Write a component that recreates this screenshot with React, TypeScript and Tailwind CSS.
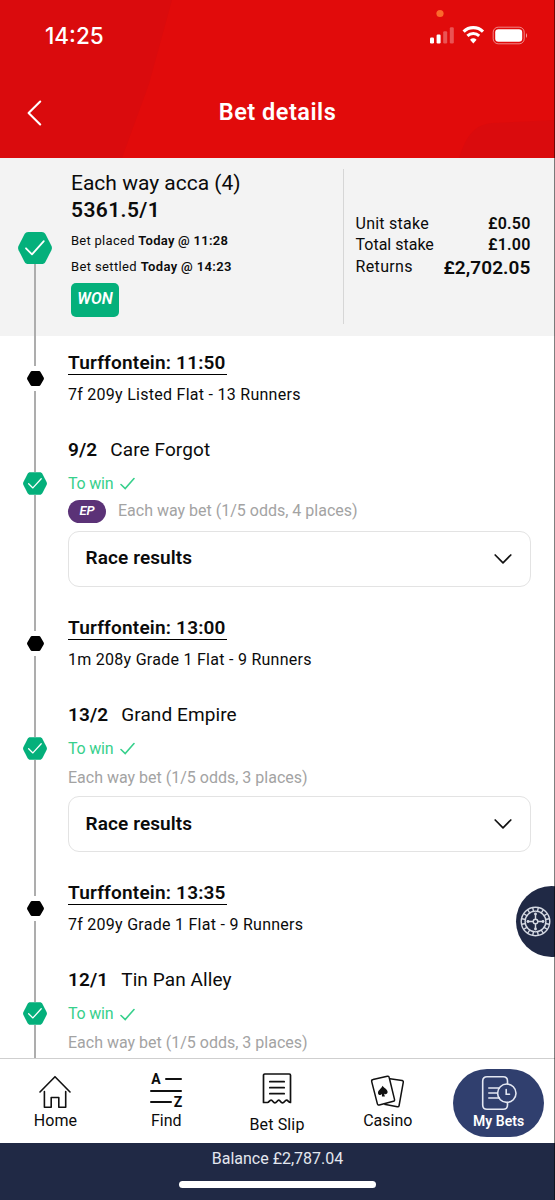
import clsx from 'clsx';

const legs = [
  {
    title: 'Turffontein: 11:50',
    race: '7f 209y Listed Flat - 13 Runners',
    odds: '9/2',
    horse: 'Care Forgot',
    terms: 'Each way bet (1/5 odds, 4 places)',
    earlyPrice: true,
    hasResults: true,
  },
  {
    title: 'Turffontein: 13:00',
    race: '1m 208y Grade 1 Flat - 9 Runners',
    odds: '13/2',
    horse: 'Grand Empire',
    terms: 'Each way bet (1/5 odds, 3 places)',
    earlyPrice: false,
    hasResults: true,
  },
  {
    title: 'Turffontein: 13:35',
    race: '7f 209y Grade 1 Flat - 9 Runners',
    odds: '12/1',
    horse: 'Tin Pan Alley',
    terms: 'Each way bet (1/5 odds, 3 places)',
    earlyPrice: false,
    hasResults: false,
  },
];

function WonHexagon({ className }: { className: string }) {
  return (
    <svg viewBox="0 0 34 32" className={clsx('block shrink-0', className)} fill="none">
      <path
        d="M10.2 0h13.6c1.6 0 2.8.8 3.6 2.1l6 11.7c.7 1.4.7 3 0 4.4l-6 11.7c-.8 1.3-2 2.1-3.6 2.1H10.2c-1.6 0-2.8-.8-3.6-2.1l-6-11.7c-.7-1.4-.7-3 0-4.4l6-11.7C7.4.8 8.6 0 10.2 0Z"
        fill="#04b07b"
      />
      <path d="M8 16.3l6 6L25.8 9.2" stroke="#fff" strokeWidth="1.8" strokeLinecap="round" strokeLinejoin="round" />
    </svg>
  );
}

function StatusBar() {
  return (
    <div className="flex h-[71px] items-center justify-between pl-[45px] pr-[27px]">
      <span className="font-['Inter'] text-[22.5px] font-medium text-white">14:25</span>
      <svg width="99" height="40" viewBox="0 0 99 40" fill="none" className="mb-[22px]">
        <circle cx="11" cy="8.5" r="3.6" fill="#fb6a2c" />
        <rect x="1" y="32.5" width="4" height="6" rx="1.2" fill="#fff" />
        <rect x="7.6" y="29.5" width="4" height="9" rx="1.2" fill="#fff" />
        <rect x="14.2" y="26.3" width="4" height="12.2" rx="1.2" fill="#fff" fillOpacity=".3" />
        <rect x="20.8" y="22.3" width="4" height="16.2" rx="1.2" fill="#fff" fillOpacity=".3" />
        <path d="M34.6 26.6a14 14 0 0 1 19.4 0" stroke="#fff" strokeWidth="3.2" />
        <path d="M38.4 30.8a8.6 8.6 0 0 1 11.8 0" stroke="#fff" strokeWidth="3" />
        <path d="M41 34.8a5 5 0 0 1 6.6 0l-3.3 3.7Z" fill="#fff" />
        <rect x="64.2" y="22.2" width="31" height="16.6" rx="5" stroke="#fff" strokeOpacity=".5" />
        <rect x="66.2" y="24.2" width="27" height="12.6" rx="3.2" fill="#fff" />
        <path d="M97 28.2c1.4.6 1.4 4 0 4.6Z" fill="#fff" fillOpacity=".6" />
      </svg>
    </div>
  );
}

function Header() {
  return (
    <header className="relative h-[158px] shrink-0 bg-[#e10b0b]">
      <svg viewBox="0 0 555 158" className="absolute inset-0 h-full w-full">
        <path d="M0 0h172L149 84 122 158H0Z" fill="#da0b0d" />
        <path d="M459 158c7-21 14-33 33-35l63-3v38Z" fill="#da0b0d" />
      </svg>
      <div className="relative">
        <StatusBar />
        <div className="grid h-[83px] grid-cols-[70px_1fr_70px] items-center">
          <svg width="16" height="26" viewBox="0 0 16 26" fill="none" className="ml-[26.5px]">
            <path d="M13.2 1.5L1.6 13l11.6 11.5" stroke="#fff" strokeWidth="2.1" strokeLinecap="round" strokeLinejoin="round" />
          </svg>
          <h1 className="text-center text-[23.5px] font-semibold tracking-[0.5px] text-white">Bet details</h1>
        </div>
      </div>
    </header>
  );
}

function Summary() {
  return (
    <section className="flex h-[178px] shrink-0 bg-[#f3f3f3]">
      <div className="ml-[18px] flex w-[34px] flex-col items-center pt-[74px]">
        <WonHexagon className="h-8 w-[34px]" />
        <div className="w-[1.5px] flex-1 bg-[#adadad]" />
      </div>
      <div className="ml-[19px] w-[271.5px] pt-3">
        <p className="text-[21px] leading-[27px]">Each way acca (4)</p>
        <p className="text-[21px] leading-[27px] font-semibold tracking-[0.4px]">5361.5/1</p>
        <p className="mt-1 text-[13px] leading-[26px] tracking-[0.27px]">
          Bet placed <b className="font-semibold">Today @ 11:28</b>
        </p>
        <p className="text-[13px] leading-[26px] tracking-[0.37px]">
          Bet settled <b className="font-semibold">Today @ 14:23</b>
        </p>
        <span className="mt-[3px] flex h-[34px] w-12 items-center justify-center rounded-[5px] bg-[#04b07b] pb-0.5 text-[16px] font-semibold text-white italic">
          WON
        </span>
      </div>
      <div className="mt-[11px] mb-3 w-[188px] border-l-[1.5px] border-[#d6d6d6] pt-11 pl-3 text-[16px] leading-[21.3px]">
        <div className="flex justify-between">
          <span className="tracking-[0.25px]">Unit stake</span>
          <b className="font-semibold tracking-[0.2px]">£0.50</b>
        </div>
        <div className="flex justify-between">
          <span>Total stake</span>
          <b className="font-semibold tracking-[0.2px]">£1.00</b>
        </div>
        <div className="flex justify-between">
          <span className="tracking-[0.35px]">Returns</span>
          <b className="pt-px text-[19px] font-semibold tracking-[0.1px]">£2,702.05</b>
        </div>
      </div>
    </section>
  );
}

function Leg({ leg }: { leg: (typeof legs)[number] }) {
  return (
    <article className="flex h-[265.3px] shrink-0">
      <div className="ml-[18px] flex w-[34px] shrink-0 flex-col items-center">
        <div className="h-[29.5px] w-[1.5px] bg-[#adadad]" />
        <svg viewBox="0 0 17 15" className="my-[5px] h-[15px] w-[17px]">
          <path d="M5 0h7c.7 0 1.2.3 1.5.9l3.2 5.7c.3.6.3 1.2 0 1.8l-3.2 5.7c-.3.6-.8.9-1.5.9H5c-.7 0-1.2-.3-1.5-.9L.3 8.4a1.9 1.9 0 0 1 0-1.8L3.5.9C3.8.3 4.3 0 5 0Z" />
        </svg>
        <div className="h-[81px] w-[1.5px] bg-[#adadad]" />
        <WonHexagon className="h-[23px] w-6" />
        <div className="w-[1.5px] flex-1 bg-[#adadad]" />
      </div>

      <div className="mr-6 ml-4 min-w-0 flex-1 pt-[14.5px]">
        <h2 className="w-fit border-b-[1.5px] border-black pr-px text-[19px] leading-[23px] font-semibold tracking-[0.2px]">
          {leg.title}
        </h2>
        <p className="mt-2 text-[16px] leading-6 tracking-[0.27px]">{leg.race}</p>
        <p className="mt-[29px] flex gap-[13px] text-[19px] leading-7 tracking-[0.1px]">
          <b className="font-semibold">{leg.odds}</b>
          <span>{leg.horse}</span>
        </p>
        <p className="mt-[9px] flex items-center gap-[7px] text-[16px] leading-[22px] tracking-[-0.2px] text-[#37d08c]">
          To win
          <svg width="15" height="13" viewBox="0 0 15 13" fill="none">
            <path d="M1 7.5l4.2 4L14 1.5" stroke="#37d08c" strokeWidth="1.6" strokeLinecap="round" />
          </svg>
        </p>
        <p
          className={clsx(
            'flex items-center text-[16px] leading-6 text-[#a3a3a3]',
            leg.earlyPrice ? 'mt-[4.5px]' : 'mt-[6px] -mb-[1.5px]'
          )}
        >
          {leg.earlyPrice && (
            <span className="mr-3 flex h-[23px] w-[38px] items-center justify-center rounded-full bg-[#5b3277] text-[13px] font-semibold text-white italic">
              EP
            </span>
          )}
          {leg.terms}
        </p>
        {leg.hasResults && (
          <button className="mt-[7.5px] flex h-14 w-full items-center justify-between rounded-[11px] border-[1.5px] border-[#e3e3e3] pr-[18px] pl-[16.5px] text-[19px] font-semibold tracking-[0.1px]">
            Race results
            <svg width="18" height="10" viewBox="0 0 18 10" fill="none">
              <path d="M1.2 1L9 8.8 16.8 1" stroke="#111" strokeWidth="1.7" strokeLinecap="round" strokeLinejoin="round" />
            </svg>
          </button>
        )}
      </div>
    </article>
  );
}

function RouletteButton() {
  const pockets = Array.from({ length: 16 }, (_, i) => i * 22.5 + 11.25);
  return (
    <button className="absolute top-[886px] left-[516px] flex h-[71px] w-[71px] items-center rounded-full bg-[#202945] pl-1">
      <svg width="31" height="31" viewBox="0 0 31 31" fill="none" stroke="#d5d9e3" strokeWidth="1.4">
        <circle cx="15.5" cy="15.5" r="14.3" />
        <circle cx="15.5" cy="15.5" r="10.4" />
        {pockets.map((angle) => (
          <path key={angle} d="M15.5 1.5v4" transform={`rotate(${angle} 15.5 15.5)`} />
        ))}
        <path d="M15.5 7v17M7 15.5h17" />
        <circle cx="15.5" cy="15.5" r="2.3" fill="#202945" />
        <g fill="#d5d9e3" stroke="none">
          <circle cx="15.5" cy="8" r="1.4" />
          <circle cx="15.5" cy="23" r="1.4" />
          <circle cx="8" cy="15.5" r="1.4" />
          <circle cx="23" cy="15.5" r="1.4" />
        </g>
      </svg>
    </button>
  );
}

function HomeIcon() {
  return (
    <svg width="32" height="34" viewBox="0 0 32 34" fill="none" stroke="#111" strokeWidth="1.6" strokeLinecap="round" strokeLinejoin="round">
      <path d="M1 17L16 1.7 31 17" />
      <path d="M5.4 16.5v15.7h6.8v-9.7h7.6v9.7h6.9V16.5" />
    </svg>
  );
}

function FindIcon() {
  return (
    <div className="flex h-[35px] w-8 flex-col justify-between text-[14px] leading-3 font-bold">
      <div className="flex items-center justify-between pl-px">
        <span>A</span>
        <span className="h-0.5 w-[17px] rounded-full bg-[#111]" />
      </div>
      <span className="h-0.5 w-full shrink-0 rounded-full bg-[#111]" />
      <div className="flex items-center justify-between">
        <span className="h-0.5 w-[21.5px] rounded-full bg-[#111]" />
        <span>Z</span>
      </div>
    </div>
  );
}

function BetSlipIcon() {
  return (
    <svg width="30" height="34" viewBox="0 0 30 34" fill="none" stroke="#111" strokeWidth="1.7" strokeLinecap="round" strokeLinejoin="round">
      <path d="M1.5 30.5V3.2c0-.8.5-1.2 1.2-1.2h24.6c.8 0 1.2.4 1.2 1.2v27.3c-2 0-2.2-2.3-4-2.3s-2 2.6-4 2.6-2-2.6-3.7-2.6-2 2.6-3.9 2.6-2-2.6-3.8-2.6-2 2.3-3.6 2.3Z" />
      <path d="M7.8 9.7h14.4M7.8 15.7h14.4M7.8 21.7h14.4" />
    </svg>
  );
}

function CasinoIcon() {
  return (
    <svg width="34" height="34" viewBox="0 0 34 34" fill="none" stroke="#111" strokeWidth="1.5" strokeLinejoin="round" className="-ml-px">
      <path d="M20 3.8l12 1.7c1 .2 1.5.8 1.3 1.7l-4.2 23.3c-.2 1-.8 1.5-1.8 1.3l-13-2.6" />
      <path d="M3 4.5L17.3 1.3c1-.2 1.7.2 1.9 1.2l5.3 21.9c.2 1-.1 1.7-1.100 1.900L9.300 30c-1 .3-1.700-.2-1.900-1.100L1.700 6.600C1.500 5.500 2 4.700 3 4.500Z" fill="#fff" />
      <path
        d="M12.500 10.800c1.400 2.300 4.800 3.200 5.100 5.900.2 2-1.900 3.200-3.500 2.100l.8 2.700h-3l.1-2.500c-1.400 1.600-3.900 1.100-4-1.100-.1-2.700 3.500-4.100 4.500-7.100Z"
        fill="#111"
        stroke="none"
      />
    </svg>
  );
}

function MyBetsIcon() {
  return (
    <svg width="36" height="36" viewBox="0 0 36 36" fill="none" stroke="#e3e7f2" strokeWidth="1.6" strokeLinecap="round">
      <path d="M26.5 9V6c0-2.600-1.600-4.300-4.300-4.300H6C3.300 1.700 1.700 3.400 1.700 6v24c0 2.600 1.600 4.300 4.300 4.300h16.200c2.700 0 4.300-1.700 4.300-4.300v-2.500" />
      <path d="M7.800 13h10.500M7.800 18h8M7.800 23h10.500" />
      <circle cx="25.800" cy="18.200" r="9.200" />
      <path d="M25.200 14.500v4.800h3.300" />
    </svg>
  );
}

function BottomNav() {
  return (
    <nav className="grid h-[85px] shrink-0 grid-cols-5 border-t-[1.5px] border-[#cfcfcf] bg-white pr-px text-[16px]">
      <a className="flex flex-col items-center pt-4">
        <HomeIcon />
        <span className="leading-6">Home</span>
      </a>
      <a className="flex flex-col items-center pt-3.5">
        <FindIcon />
        <span className="mt-px leading-6">Find</span>
      </a>
      <a className="flex flex-col items-center pt-[13px]">
        <BetSlipIcon />
        <span className="mt-[6.5px] leading-6 tracking-[0.15px]">Bet Slip</span>
      </a>
      <a className="flex flex-col items-center pt-4">
        <CasinoIcon />
        <span className="leading-6">Casino</span>
      </a>
      <a className="mt-[9.5px] flex h-[68px] w-[91px] flex-col items-center justify-self-center rounded-[34px] bg-[#303f6e] pt-1.5 text-white">
        <MyBetsIcon />
        <span className="text-[14px] leading-5 font-semibold">My Bets</span>
      </a>
    </nav>
  );
}

export default function App() {
  return (
    <div className="relative flex h-[1200px] w-[555px] flex-col overflow-hidden bg-white font-['Roboto',sans-serif] text-[#0b0b0b]">
      <Header />
      <Summary />
      <main className="flex min-h-0 flex-1 flex-col overflow-hidden">
        {legs.map((leg) => (
          <Leg key={leg.title} leg={leg} />
        ))}
      </main>
      <BottomNav />
      <footer className="flex h-[57px] shrink-0 flex-col items-center bg-[#202945] pt-1">
        <p className="text-[16px] leading-6 text-[#e4e7ef]">Balance £2,787.04</p>
        <div className="mt-[10px] h-[7px] w-[197px] rounded-full bg-white" />
      </footer>
      <RouletteButton />
      <div className="absolute inset-y-0 right-0 w-px bg-black/50" />
    </div>
  );
}
